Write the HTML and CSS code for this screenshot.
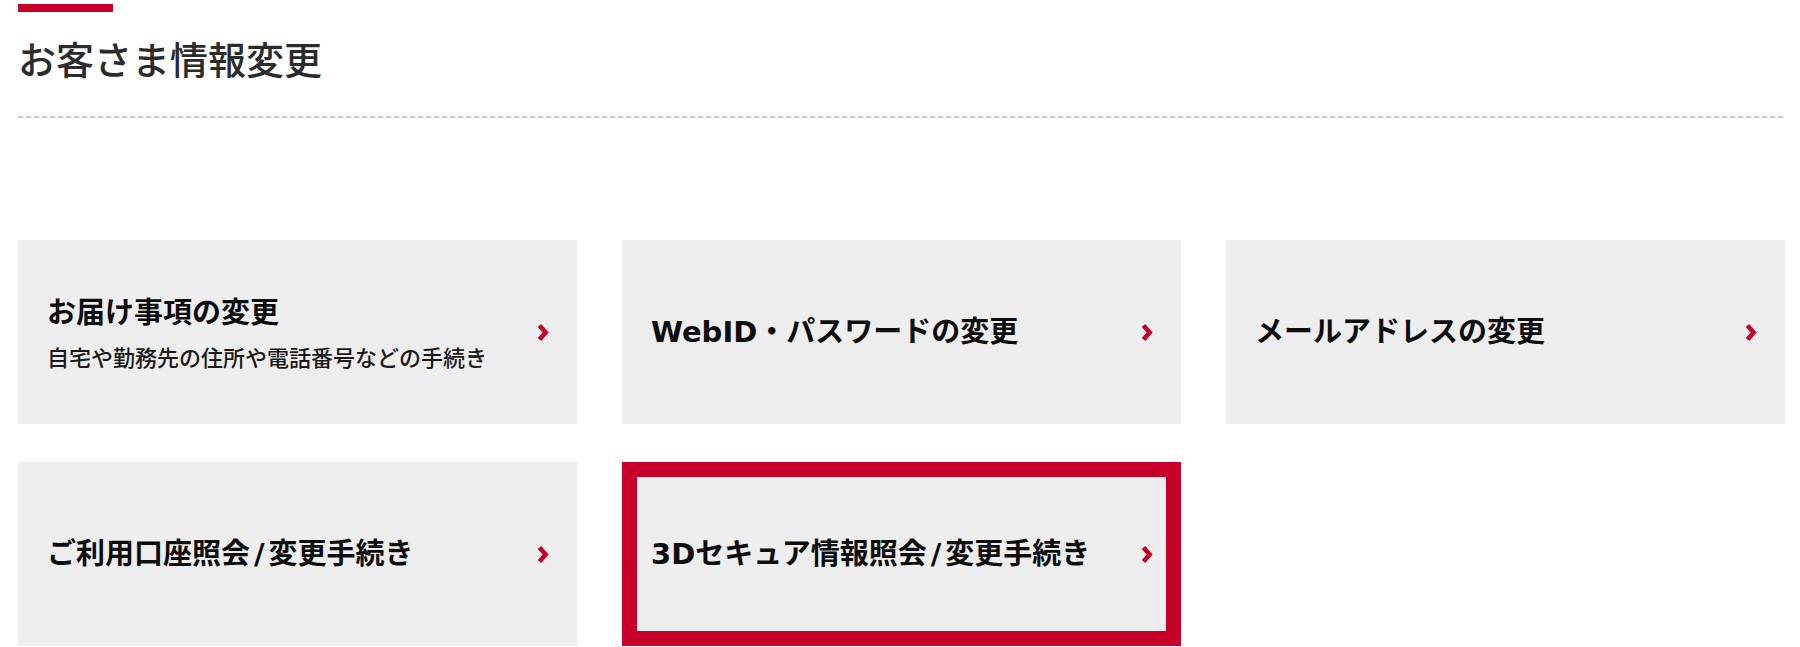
FILE: index.html
```html
<!DOCTYPE html>
<html lang="ja">
<head>
<meta charset="utf-8">
<title>お客さま情報変更</title>
<link rel="stylesheet" href="styles.css">
</head>
<body>
<div class="page">
  <div class="accent"></div>
  <h1 class="heading">お客さま情報変更</h1>
  <div class="divider"></div>
  <div class="cards">
    <a class="card" href="#">
      <div class="card-text">
        <div class="card-title">お届け事項の変更</div>
        <div class="card-sub">自宅や勤務先の住所や電話番号などの手続き</div>
      </div>
      <svg class="chev" viewBox="0 0 12 19" width="12" height="19"><path d="M2.5 2.6 L8.6 9.5 L2.5 16.4"/></svg>
    </a>
    <a class="card" href="#">
      <div class="card-text">
        <div class="card-title">WebID・パスワードの変更</div>
      </div>
      <svg class="chev" viewBox="0 0 12 19" width="12" height="19"><path d="M2.5 2.6 L8.6 9.5 L2.5 16.4"/></svg>
    </a>
    <a class="card" href="#">
      <div class="card-text">
        <div class="card-title">メールアドレスの変更</div>
      </div>
      <svg class="chev" viewBox="0 0 12 19" width="12" height="19"><path d="M2.5 2.6 L8.6 9.5 L2.5 16.4"/></svg>
    </a>
    <a class="card" href="#">
      <div class="card-text">
        <div class="card-title">ご利用口座照会<span class="slash">/</span>変更手続き</div>
      </div>
      <svg class="chev" viewBox="0 0 12 19" width="12" height="19"><path d="M2.5 2.6 L8.6 9.5 L2.5 16.4"/></svg>
    </a>
    <a class="card card-active" href="#">
      <div class="card-text">
        <div class="card-title">3Dセキュア情報照会<span class="slash">/</span>変更手続き</div>
      </div>
      <svg class="chev" viewBox="0 0 12 19" width="12" height="19"><path d="M2.5 2.6 L8.6 9.5 L2.5 16.4"/></svg>
    </a>
  </div>
</div>
</body>
</html>
```

FILE: styles.css
```css
html, body {
  margin: 0;
  padding: 0;
  background: #ffffff;
}

.page {
  width: 1767px;
  margin-left: 18px;
  padding-top: 4px;
  font-family: "Noto Sans CJK JP", sans-serif;
}

.accent {
  width: 95px;
  height: 8px;
  background: #c70029;
}

.heading {
  margin: 27px 0 0;
  font-size: 38px;
  line-height: 38px;
  font-weight: 500;
  color: #2b2b2b;
}

.divider {
  margin-top: 39px;
  height: 2px;
  background: repeating-linear-gradient(to right, #c9c9c9 0, #c9c9c9 5px, transparent 5px, transparent 8px);
}

.cards {
  margin-top: 122px;
  display: grid;
  grid-template-columns: repeat(3, 559px);
  column-gap: 45px;
  row-gap: 38px;
}

.card {
  display: flex;
  align-items: center;
  justify-content: space-between;
  height: 184px;
  box-sizing: border-box;
  padding: 0 28px 0 29px;
  background: #eeeeee;
  text-decoration: none;
  color: #111111;
}

.card-active {
  box-shadow: inset 0 0 0 15px #c70029;
}

.card-title {
  font-family: "DejaVu Sans", "Noto Sans CJK JP", sans-serif;
  font-size: 29px;
  line-height: 40px;
  font-weight: 700;
  color: #0d0d0d;
}

.slash {
  margin: 0 4px;
}

.card-sub {
  margin-top: 7px;
  font-family: "Noto Sans CJK JP", sans-serif;
  font-size: 22px;
  line-height: 32px;
  font-weight: 500;
  color: #1a1a1a;
}

.chev {
  flex: none;
  display: block;
}

.chev path {
  fill: none;
  stroke: #c70029;
  stroke-width: 4.6;
  stroke-linejoin: miter;
}
```
